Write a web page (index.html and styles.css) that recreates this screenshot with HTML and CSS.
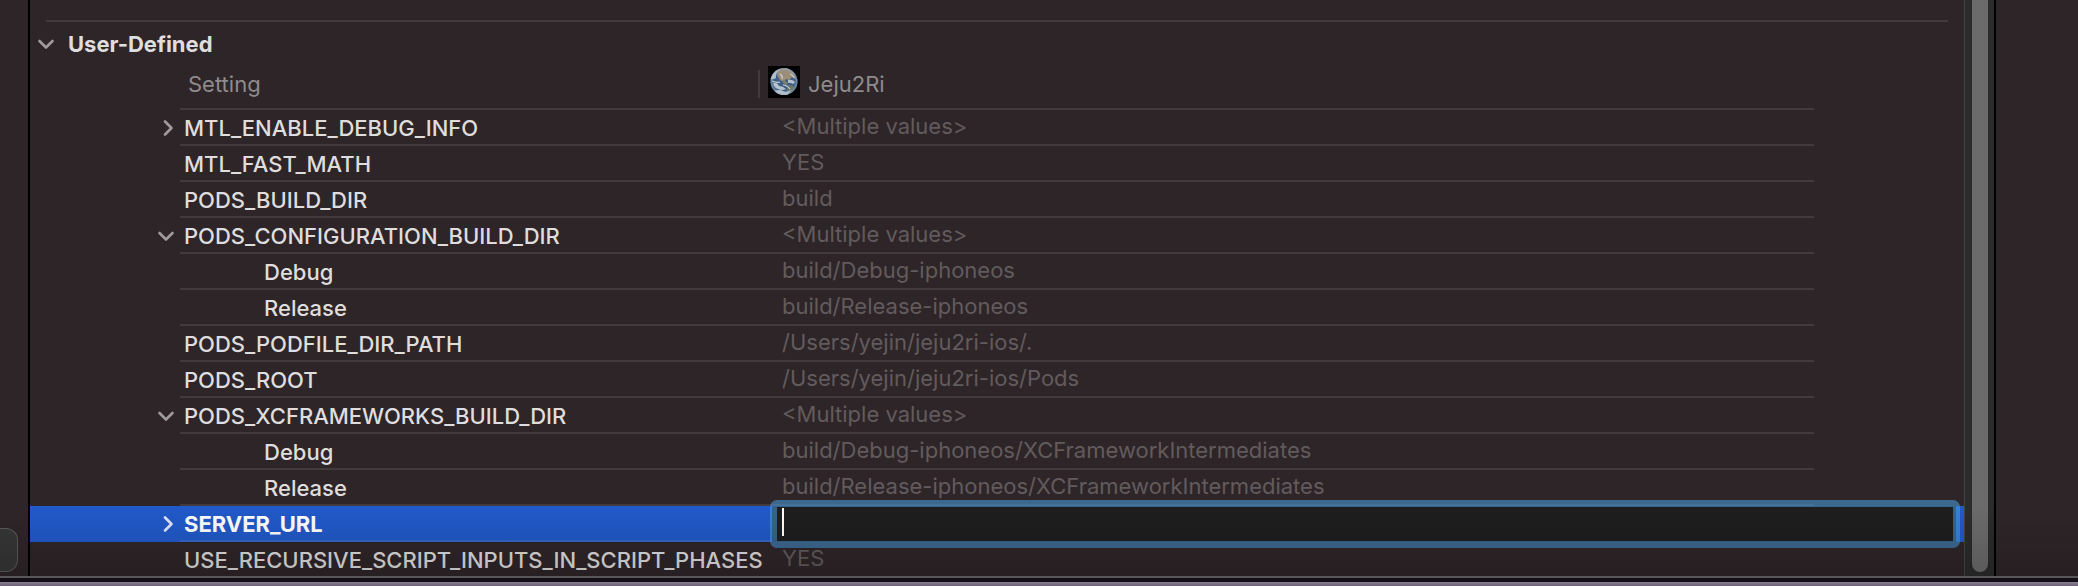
FILE: index.html
```html
<!DOCTYPE html>
<html lang="en">

<head>
    <meta charset="UTF-8">
    <meta name="viewport" content="width=device-width, initial-scale=1.0">
    <title>Build Settings</title>
    <link rel="stylesheet" href="styles.css">
</head>

<body>
    <div class="window">
        <!-- left pane -->
        <div class="side-left">
            <button class="side-button" type="button" aria-label="Filter"></button>
        </div>

        <!-- build settings -->
        <main class="editor">
            <h2 class="section-title">
                <button class="toggle" type="button" aria-label="Collapse User-Defined">
                    <svg viewBox="0 0 20 20"><path d="M3.500 7l6.500 6.500L16.500 7" /></svg>
                </button>
                User-Defined
            </h2>
            <table class="settings">
                <colgroup>
                    <col class="col-toggle">
                    <col class="col-name">
                    <col>
                    <col class="col-tail">
                </colgroup>
                <thead>
                    <tr>
                        <td></td>
                        <th class="line">Setting</th>
                        <th class="line">
                            <div class="target">
                                <svg class="target-icon" viewBox="0 0 32 32">
                                    <defs>
                                        <radialGradient id="shade" cx="50%" cy="50%" r="50%">
                                            <stop offset="75%" stop-color="#9db4ca" stop-opacity="0" />
                                            <stop offset="100%" stop-color="#9db4ca" stop-opacity=".6" />
                                        </radialGradient>
                                        <clipPath id="globe"><circle cx="16" cy="15.500" r="13.500" /></clipPath>
                                    </defs>
                                    <rect width="32" height="32" fill="#000" />
                                    <g clip-path="url(#globe)">
                                        <rect width="32" height="32" fill="#3f5f86" />
                                        <path d="M10 3l9-1 7 5 2 6-4-2-3 3-3-1-2 3-4-2-3-5z" fill="#9b8d78" />
                                        <path d="M15 14l3 1 2 3-2 1-3-2z" fill="#77806a" />
                                        <path d="M19 20l5-1 2 3-4 5-3-2z" fill="#6d7760" />
                                        <path d="M2 10q4-6 9-6-4 4-3 8-3 2-6 1zM5 17q4-1 6 3 4 0 7 3-4 2-8 0-4-1-5-6zM20 14q4-1 7 2l-2 2q-3-2-5-1zM6 25q6-2 9 0t8-1l-4 6H9z" fill="#b6c2cc" />
                                        <path d="M12 8q3 2 2 5M4 15q5 2 8 1M15 19q4 0 7 4M22 8q3 1 4 4" fill="none" stroke="#cdd3d6" stroke-width="1.200" />
                                    </g>
                                    <circle cx="16" cy="15.500" r="13.500" fill="url(#shade)" />
                                </svg>
                                Jeju2Ri
                            </div>
                        </th>
                        <td></td>
                    </tr>
                </thead>
                <tbody>
                    <tr>
                        <td class="fold"><button class="toggle" type="button" aria-label="Expand"><svg viewBox="0 0 20 20"><path d="M9 3.500l6.500 6.500L9 16.500" /></svg></button></td>
                        <td class="name line">MTL_ENABLE_DEBUG_INFO</td>
                        <td class="value line">&lt;Multiple values&gt;</td>
                        <td></td>
                    </tr>
                    <tr>
                        <td></td>
                        <td class="name line">MTL_FAST_MATH</td>
                        <td class="value line">YES</td>
                        <td></td>
                    </tr>
                    <tr>
                        <td></td>
                        <td class="name line">PODS_BUILD_DIR</td>
                        <td class="value line">build</td>
                        <td></td>
                    </tr>
                    <tr>
                        <td class="fold"><button class="toggle" type="button" aria-label="Collapse"><svg viewBox="0 0 20 20"><path d="M3.500 7l6.500 6.500L16.500 7" /></svg></button></td>
                        <td class="name line">PODS_CONFIGURATION_BUILD_DIR</td>
                        <td class="value line">&lt;Multiple values&gt;</td>
                        <td></td>
                    </tr>
                    <tr>
                        <td></td>
                        <td class="name child line">Debug</td>
                        <td class="value line">build/Debug-iphoneos</td>
                        <td></td>
                    </tr>
                    <tr>
                        <td></td>
                        <td class="name child line">Release</td>
                        <td class="value line">build/Release-iphoneos</td>
                        <td></td>
                    </tr>
                    <tr>
                        <td></td>
                        <td class="name line">PODS_PODFILE_DIR_PATH</td>
                        <td class="value line">/Users/yejin/jeju2ri-ios/.</td>
                        <td></td>
                    </tr>
                    <tr>
                        <td></td>
                        <td class="name line">PODS_ROOT</td>
                        <td class="value line">/Users/yejin/jeju2ri-ios/Pods</td>
                        <td></td>
                    </tr>
                    <tr>
                        <td class="fold"><button class="toggle" type="button" aria-label="Collapse"><svg viewBox="0 0 20 20"><path d="M3.500 7l6.500 6.500L16.500 7" /></svg></button></td>
                        <td class="name line">PODS_XCFRAMEWORKS_BUILD_DIR</td>
                        <td class="value line">&lt;Multiple values&gt;</td>
                        <td></td>
                    </tr>
                    <tr>
                        <td></td>
                        <td class="name child line">Debug</td>
                        <td class="value line">build/Debug-iphoneos/XCFrameworkIntermediates</td>
                        <td></td>
                    </tr>
                    <tr>
                        <td></td>
                        <td class="name child line">Release</td>
                        <td class="value line">build/Release-iphoneos/XCFrameworkIntermediates</td>
                        <td></td>
                    </tr>
                    <tr class="selected">
                        <td class="fold"><button class="toggle" type="button" aria-label="Expand"><svg viewBox="0 0 20 20"><path d="M9 3.500l6.500 6.500L9 16.500" /></svg></button></td>
                        <td class="name line"><label for="server-url">SERVER_URL</label></td>
                        <td class="edit" colspan="2">
                            <div class="field">
                                <input id="server-url" class="field-input" type="text">
                                <span class="caret"></span>
                            </div>
                        </td>
                    </tr>
                    <tr>
                        <td></td>
                        <td class="name line">USE_RECURSIVE_SCRIPT_INPUTS_IN_SCRIPT_PHASES</td>
                        <td class="value line">YES</td>
                        <td></td>
                    </tr>
                </tbody>
            </table>
        </main>

        <!-- scroll bar -->
        <div class="scroll-track">
            <div class="scroll-thumb"></div>
        </div>

        <!-- right pane -->
        <div class="side-right"></div>
    </div>
    <div class="desktop"></div>
</body>

</html>
```

FILE: styles.css
```css
*,
::after,
::before {
    margin: 0;
    padding: 0;
    box-sizing: border-box;
}

body {
    height: 100vh;
    display: flex;
    flex-direction: column;
    overflow: hidden;
    background-color: #000;
    color: #dfdddd;
    font-family: Inter, "Liberation Sans", sans-serif;
    font-size: 22px;
    line-height: 32px;
}

/* window */

.window {
    flex: 1;
    min-height: 0;
    display: flex;
    position: relative;
    overflow: hidden;
    background-color: #2e2528;
}

/* shade and light edge along the bottom of the window */

.window::after {
    content: "";
    position: absolute;
    left: 0;
    right: 0;
    bottom: 0;
    height: 72px;
    border-bottom: 2px solid #5a5657;
    background-image: linear-gradient(rgba(0, 0, 0, 0), rgba(0, 0, 0, 0.16));
    pointer-events: none;
}

.side-left {
    width: 30px;
    flex-shrink: 0;
    display: flex;
    flex-direction: column;
    justify-content: flex-end;
    padding-bottom: 6px;
    border-right: 2px solid #000;
}

.side-button {
    width: 18px;
    height: 44px;
    border: 1px solid #5c5a5b;
    border-left: none;
    border-radius: 0 12px 12px 0;
    background-color: #363636;
}

.side-right {
    width: 84px;
    flex-shrink: 0;
    border-left: 2px solid #000;
}

.scroll-track {
    width: 30px;
    flex-shrink: 0;
    padding: 0 6px 6px 7px;
    border-left: 1px solid #444;
    background-color: #2b2b2b;
}

.scroll-thumb {
    width: 16px;
    height: 100%;
    border-radius: 0 0 8px 8px;
    background-color: #6b6b6b;
}

/* settings */

.editor {
    flex: 1;
    min-width: 0;
    padding-top: 20px;
}

.editor::before {
    content: "";
    display: block;
    height: 2px;
    margin: 0 16px;
    background-color: #433a3d;
}

.section-title {
    display: flex;
    align-items: center;
    gap: 12px;
    padding: 6px 6px 0;
    font-size: 22px;
    font-weight: 700;
}

.toggle {
    width: 20px;
    height: 20px;
    flex-shrink: 0;
    border: none;
    background: none;
    color: #9f9b9c;
}

.toggle svg {
    display: block;
    width: 20px;
    height: 20px;
    fill: none;
    stroke: currentColor;
    stroke-width: 2.6;
    stroke-linecap: round;
    stroke-linejoin: round;
}

.settings {
    width: 100%;
    table-layout: fixed;
    border-collapse: separate;
    border-spacing: 0;
    white-space: nowrap;
}

.col-toggle,
.col-tail {
    width: 150px;
}

.col-name {
    width: 592px;
}

.line {
    border-bottom: 2px solid #433a3d;
}

.settings thead th {
    height: 50px;
    padding-left: 8px;
    color: #8f8b8c;
    font-weight: 400;
    text-align: left;
}

.settings thead th + th {
    padding-left: 0;
}

.target {
    display: flex;
    align-items: center;
    gap: 8px;
    height: 28px;
    margin-left: -14px;
    padding-left: 8px;
    border-left: 2px solid #433a3d;
}

.target-icon {
    width: 32px;
    height: 32px;
    margin-bottom: 4px;
}

.settings tbody tr {
    height: 36px;
}

.fold {
    padding-right: 4px;
}

.fold .toggle {
    display: block;
    margin-left: auto;
}

.name {
    padding: 2px 0 0 4px;
    font-weight: 500;
}

.child {
    padding-left: 84px;
}

.value {
    padding: 0 0 2px 10px;
    color: #625b5d;
}

/* selected row */

.selected {
    background-color: #2159c9;
    color: #fff;
}

.selected .name {
    font-weight: 700;
}

.selected .toggle {
    color: #dfe6f7;
}

.selected .line {
    border-color: #3666c6;
}

.edit {
    padding-right: 8px;
}

.field {
    display: flex;
    position: relative;
    height: 36px;
    background-color: #1e1e1e;
}

/* the focus ring spills over the rows around it */

.field-input {
    flex: 1;
    min-width: 0;
    height: 48px;
    margin: -6px -4px -6px -2px;
    padding: 0 5px;
    border: 7px solid rgba(74, 162, 237, 0.53);
    border-radius: 7px;
    outline: none;
    background-color: #1e1e1e;
    background-clip: padding-box;
    color: #fff;
    font: inherit;
}

.caret {
    position: absolute;
    top: 2px;
    left: 10px;
    width: 2px;
    height: 28px;
    background-color: #fff;
}

/* strip under the window */

.desktop {
    height: 8px;
    flex-shrink: 0;
    border-top: 4px solid #140e18;
    background-image: linear-gradient(#8b7f92, #6c6078);
}
```
